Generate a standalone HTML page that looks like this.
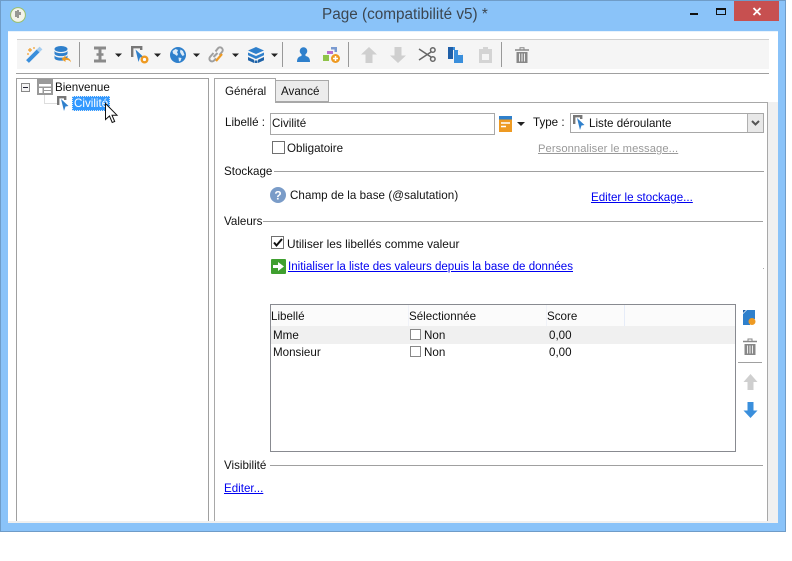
<!DOCTYPE html>
<html><head><meta charset="utf-8"><style>
html,body{margin:0;padding:0;background:#fff;width:792px;height:561px;overflow:hidden}
body{position:relative;font-family:"Liberation Sans",sans-serif;font-size:11.6px;color:#111}
.a{position:absolute}
.t{position:absolute;white-space:nowrap;line-height:16px;margin-top:1px}
.l{color:#0000f0;text-decoration:underline}
.hr{position:absolute;height:1px;background:#a0a0a0}
.cb{position:absolute;box-sizing:border-box;border:1px solid #707070;background:#fff}
svg{position:absolute;overflow:visible}
</style></head><body>
<div class="a" style="left:0;top:0;width:786px;height:532px;box-sizing:border-box;background:#8ac3f9;border:1px solid #6f9cc8"></div>
<div class="a" style="left:8px;top:31px;width:770px;height:492px;background:#fff"></div>
<div class="a" style="left:8px;top:521px;width:770px;height:2px;background:#f0f0f0"></div>
<div class="a" style="left:768px;top:102px;width:10px;height:421px;background:#f0f0f0"></div>
<div class="a" style="left:8px;top:31px;width:770px;height:1px;background:#e8f3fd"></div>

<svg style="left:10px;top:7px" width="16" height="16" viewBox="0 0 16 16"><circle cx="8" cy="8" r="7.4" fill="#f3f3ea" stroke="#9abf6a"/><path d="M6 4v6M8 3v8M10 5v3" stroke="#666" stroke-width="1.3" fill="none"/></svg>
<div class="t" style="left:322px;top:6px;margin-top:0;font-size:15.3px;line-height:18px;color:#3c4650">Page (compatibilité v5) *</div>
<div class="a" style="left:690px;top:13px;width:8px;height:2px;background:#111"></div>
<div class="a" style="left:716px;top:8px;width:10px;height:7px;box-sizing:border-box;border:1px solid #111;border-top-width:2px"></div>
<div class="a" style="left:734px;top:1px;width:45px;height:20px;background:#c75050"></div>
<svg style="left:752px;top:7px" width="10" height="9" viewBox="0 0 10 9"><path d="M1.5 1L8.5 8M8.5 1L1.5 8" stroke="#fff" stroke-width="1.8"/></svg>

<div class="a" style="left:17px;top:39px;width:752px;height:30px;background:#f5f5f5;border-top:1px solid #d0d0d0;box-sizing:border-box"></div>
<div class="hr" style="left:16px;top:73px;width:753px"></div>
<div class="a" style="left:79px;top:42px;width:1px;height:25px;background:#999"></div>
<div class="a" style="left:282px;top:42px;width:1px;height:25px;background:#999"></div>
<div class="a" style="left:348px;top:42px;width:1px;height:25px;background:#999"></div>
<div class="a" style="left:501px;top:42px;width:1px;height:25px;background:#999"></div>

<!-- wand -->
<svg style="left:26px;top:46px" width="17" height="17" viewBox="0 0 17 17"><path d="M1.500 15.500L12.500 4.500" stroke="#3a8fdc" stroke-width="4"/><path d="M12 5l3-3" stroke="#a5cdf0" stroke-width="4"/><path d="M2 4h4M4 2v4M8 1v2M1 8h2" stroke="#f0a030" stroke-width="1.200"/></svg>
<!-- db -->
<svg style="left:54px;top:46px" width="18" height="17" viewBox="0 0 18 17"><ellipse cx="7" cy="3" rx="6.500" ry="3" fill="#2f80cc"/><path d="M.5 4.500c0 3.500 13 3.500 13 0V7.500c0 3.500-13 3.500-13 0zM.5 9c0 3.500 13 3.500 13 0v3c0 3.500-13 3.500-13 0z" fill="#2f80cc"/><path d="M7.500 13l4-3.500v2.200c3 0 5 1 5.500 4.800-1-2-3-2.600-5.500-2.600v2.100z" fill="#ee9a22"/></svg>
<!-- I-beam -->
<svg style="left:94px;top:46px" width="12" height="17" viewBox="0 0 12 17"><path d="M0 2h12M0 15h12M6 2v13" stroke="#8a8a8a" stroke-width="3" fill="none"/><path d="M2.500 8.500h7" stroke="#8a8a8a" stroke-width="2.500"/></svg>
<!-- cursor gear -->
<svg style="left:131px;top:46px" width="18" height="18" viewBox="0 0 18 18"><path d="M1.200 11V1.200h9V4" stroke="#777" stroke-width="2.400" fill="none"/><path d="M4.500 3.500l8 7.500-3.500.5-1.500 4.500z" fill="#2f80cc"/><circle cx="13.500" cy="13.500" r="2.800" fill="#fff" stroke="#ee9a22" stroke-width="2.400"/></svg>
<!-- globe -->
<svg style="left:170px;top:47px" width="16" height="16" viewBox="0 0 16 16"><circle cx="8" cy="8" r="8" fill="#2f80cc"/><path d="M2.500 4l3-2 2.500 1-1 2.500 1 1.500-1 2-2-1.500-2-1zM10.500 2.500l2.500 1.500 1.500 4-2 1-1.500-2-1-2zM8.500 10.500l3 .5-1 3-1.500.5z" fill="#dcebf8"/></svg>
<!-- link -->
<svg style="left:208px;top:46px" width="17" height="17" viewBox="0 0 17 17"><path d="M7.500 5.500l2.300-3a2.700 2.700 0 0 1 4.400 3.200L11.500 9M5.500 7L2 11a2.700 2.700 0 0 0 4.200 3.400l1.800-2" stroke="#a0a0a0" stroke-width="2" fill="none"/><path d="M5.500 11l4-4" stroke="#a0a0a0" stroke-width="2"/><path d="M8 15l6-7" stroke="#ee9a22" stroke-width="2.200"/></svg>
<!-- layers -->
<svg style="left:248px;top:47px" width="16" height="16" viewBox="0 0 16 16"><path d="M8 0l8 3.500-8 3.500-8-3.500z" fill="#2f80cc"/><path d="M0 5.500l8 3.500 8-3.500v2.800L8 12 0 8.300z" fill="#2f80cc"/><path d="M0 10l6 2.800V16L0 13.200zM16 10l-6 2.800V16l6-2.800z" fill="#1f63a8"/><path d="M6.500 13.500h3V16h-3z" fill="#1f63a8"/></svg>
<!-- carets -->
<svg style="left:0;top:0" width="792" height="100"><g fill="#222"><path d="M115 53.500h7l-3.500 3.500zM154 53.500h7l-3.500 3.500zM193 53.500h7l-3.500 3.500zM232 53.500h7l-3.500 3.500zM271 53.500h7l-3.500 3.500z"/></g></svg>
<!-- user -->
<svg style="left:297px;top:47px" width="13" height="15" viewBox="0 0 13 15"><circle cx="6.500" cy="4" r="3.800" fill="#2f80cc"/><path d="M4.500 6h4v3c3 .5 4.500 2 4.500 6H0c0-4 1.500-5.500 4.500-6z" fill="#2f80cc"/></svg>
<!-- shapes -->
<svg style="left:323px;top:47px" width="17" height="17" viewBox="0 0 17 17"><rect x="0" y="8" width="6" height="6" fill="#8fc34a"/><path d="M4 4h6v3H4z" fill="#b66fd0"/><path d="M8 0h6v5h-2.500V2.500H8z" fill="#7a9ad0"/><circle cx="12.500" cy="11.500" r="4.500" fill="#ee9a22"/><path d="M10 11.500h5M12.500 9v5" stroke="#fff" stroke-width="1.500"/></svg>
<!-- up down -->
<svg style="left:361px;top:47px" width="16" height="16" viewBox="0 0 16 16"><path d="M8 0l8 7.500H11.500V16h-7V7.500H0z" fill="#cfcfcf"/></svg>
<svg style="left:390px;top:47px" width="16" height="16" viewBox="0 0 16 16"><path d="M8 16L0 8.500H4.500V0h7v8.500H16z" fill="#cfcfcf"/></svg>
<!-- scissors -->
<svg style="left:419px;top:47px" width="17" height="15" viewBox="0 0 17 15"><circle cx="13.800" cy="3" r="2.300" fill="none" stroke="#666" stroke-width="1.500"/><circle cx="13.800" cy="12" r="2.300" fill="none" stroke="#666" stroke-width="1.500"/><path d="M0 2l12 8M0 13L12 5" stroke="#666" stroke-width="1.500"/></svg>
<!-- copy -->
<svg style="left:448px;top:47px" width="16" height="16" viewBox="0 0 16 16"><path d="M0 0h5v12H0z" fill="#1f5fa8"/><path d="M5 0h2v3H5z" fill="#3a8fdc"/><path d="M6 3h4l5 5v8H6z" fill="#3a8fdc"/><path d="M10 3l5 5h-5z" fill="#f5f5f5"/></svg>
<!-- paste -->
<svg style="left:479px;top:47px" width="13" height="16" viewBox="0 0 13 16"><path d="M0 2h4V0h5v2h4v14H0z" fill="#d4d4d4"/><path d="M3 7h7v6H3z" fill="#f5f5f5"/></svg>
<!-- trash -->
<svg style="left:515px;top:47px" width="14" height="16" viewBox="0 0 14 16"><path d="M0 3h14" stroke="#888" stroke-width="1.500"/><path d="M5 2.500V.8h4v1.700" stroke="#888" fill="none"/><path d="M1.500 5h11v11h-11z" fill="#888"/><path d="M4.500 6.500v8M7 6.500v8M9.500 6.500v8" stroke="#eee" stroke-width="1"/></svg>

<!-- tree -->
<div class="a" style="left:16px;top:78px;width:193px;height:443px;box-sizing:border-box;border:1px solid #a0a0a0;border-bottom:0"></div>
<div class="a" style="left:21px;top:83px;width:9px;height:9px;box-sizing:border-box;border:1px solid #888;background:#f4f4f4"></div>
<div class="a" style="left:23px;top:87px;width:5px;height:1px;background:#223"></div>
<svg style="left:37px;top:79px" width="16" height="16" viewBox="0 0 16 16"><path d="M0 0h16v16H0z" fill="#999"/><path d="M2 5h12v2.500H2zM2 9h3.500v5H2zM7 9h7v2H7zM7 12h7v2H7z" fill="#fff"/></svg>
<div class="t" style="left:55px;top:79px">Bienvenue</div>
<div class="a" style="left:44px;top:95px;width:1px;height:8px;background:#ddd"></div>
<div class="a" style="left:44px;top:103px;width:13px;height:1px;background:#ddd"></div>
<svg style="left:57px;top:96px" width="13" height="15" viewBox="0 0 13 15"><path d="M1.200 9V1.200h7V4" stroke="#777" stroke-width="2.400" fill="none"/><path d="M4 3l7.500 7-3 .5-1.500 4.500z" fill="#2f80cc"/></svg>
<div class="t" style="left:72px;top:96px;margin-top:0;width:38px;height:15px;background:#3399ff;color:#fff;outline:1px dotted #dbe9f7;outline-offset:-1px;padding-left:2px;box-sizing:border-box;line-height:15px;overflow:hidden">Civilité</div>
<svg style="left:105px;top:103px" width="13" height="21" viewBox="0 0 13 21"><path d="M.5.500v16l4-3.500 2.700 6.500 2.500-1-2.700-6.300h5z" fill="#fff" stroke="#111" stroke-width="1"/></svg>

<!-- tabs -->
<div class="a" style="left:214px;top:102px;width:554px;height:419px;box-sizing:border-box;border:1px solid #a8a8a8;border-bottom:0"></div>
<div class="a" style="left:275px;top:80px;width:54px;height:22px;box-sizing:border-box;border:1px solid #a8a8a8;background:#ececec"></div>
<div class="a" style="left:214px;top:78px;width:62px;height:25px;box-sizing:border-box;border:1px solid #a8a8a8;border-bottom:0;background:#fff"></div>
<div class="t" style="left:225px;top:83px">Général</div>
<div class="t" style="left:281px;top:83px">Avancé</div>

<div class="t" style="left:225px;top:114px">Libellé :</div>
<div class="a" style="left:270px;top:113px;width:225px;height:22px;box-sizing:border-box;border:1px solid #a8a8a8"></div>
<div class="t" style="left:272px;top:115px">Civilité</div>
<svg style="left:499px;top:116px" width="13" height="16" viewBox="0 0 13 16"><path d="M0 0h13v3.500H0z" fill="#2f80cc"/><path d="M0 3.500h13V16H0z" fill="#ee9a22"/><path d="M2 7h9M2 10.500h5" stroke="#fff" stroke-width="1.500"/></svg>
<svg style="left:517px;top:122px" width="8" height="4" viewBox="0 0 8 4"><path d="M0 0h8L4 4z" fill="#222"/></svg>
<div class="t" style="left:533px;top:114px">Type :</div>
<div class="a" style="left:570px;top:113px;width:194px;height:20px;box-sizing:border-box;border:1px solid #a8a8a8"></div>
<div class="a" style="left:747px;top:114px;width:16px;height:18px;background:#e8e8e8;border-left:1px solid #b0b0b0;box-sizing:border-box"></div>
<svg style="left:751px;top:120px" width="9" height="6" viewBox="0 0 9 6"><path d="M1 1l3.500 3.500L8 1" stroke="#555" stroke-width="2" fill="none"/></svg>
<svg style="left:573px;top:115px" width="13" height="15" viewBox="0 0 13 15"><path d="M1.200 9V1.200h7V4" stroke="#777" stroke-width="2.400" fill="none"/><path d="M4 3l7.500 7-3 .5-1.500 4.500z" fill="#2f80cc"/></svg>
<div class="t" style="left:589px;top:115px">Liste déroulante</div>

<div class="cb" style="left:272px;top:141px;width:13px;height:13px"></div>
<div class="t" style="left:287px;top:140px">Obligatoire</div>
<div class="t" style="left:538px;top:140px;color:#999;text-decoration:underline;font-size:11.2px;letter-spacing:.08px">Personnaliser le message...</div>

<div class="t" style="left:224px;top:163px">Stockage</div>
<div class="hr" style="left:274px;top:171px;width:490px"></div>
<svg style="left:270px;top:187px" width="16" height="16" viewBox="0 0 16 16"><circle cx="8" cy="8" r="8" fill="#7a9cc8"/><text x="8" y="12.500" font-family="Liberation Sans" font-size="12" font-weight="bold" fill="#fff" text-anchor="middle">?</text></svg>
<div class="t" style="left:290px;top:187px;letter-spacing:.06px">Champ de la base (@salutation)</div>
<div class="t l" style="left:591px;top:189px">Editer le stockage...</div>

<div class="t" style="left:224px;top:213px">Valeurs</div>
<div class="hr" style="left:263px;top:221px;width:500px"></div>
<div class="cb" style="left:271px;top:236px;width:13px;height:13px"></div>
<svg style="left:273px;top:238px" width="10" height="9" viewBox="0 0 10 9"><path d="M1 4.500l2.500 3L9 1" stroke="#111" stroke-width="2" fill="none"/></svg>
<div class="t" style="left:287px;top:236px;margin-top:0;font-size:11.9px">Utiliser les libellés comme valeur</div>
<svg style="left:271px;top:259px" width="15" height="15" viewBox="0 0 15 15"><rect width="15" height="15" rx="1" fill="#3f9f2f"/><path d="M2 6h5V3l6 4.500-6 4.500V9H2z" fill="#fff"/></svg>
<div class="t l" style="left:288px;top:259px;margin-top:0;font-size:11.55px">Initialiser la liste des valeurs depuis la base de données</div>
<div class="a" style="left:763px;top:268px;width:1px;height:1px;background:#aaa"></div>

<!-- table -->
<div class="a" style="left:270px;top:304px;width:466px;height:148px;box-sizing:border-box;border:1px solid #888a90;background:#fff"></div>
<div class="a" style="left:271px;top:305px;width:464px;height:21px;background:#fbfbfb"></div>
<div class="a" style="left:271px;top:326px;width:464px;height:18px;background:#f0f0f0"></div>
<div class="a" style="left:408px;top:305px;width:1px;height:21px;background:#f0f2f8"></div>
<div class="a" style="left:546px;top:305px;width:1px;height:21px;background:#f0f2f8"></div>
<div class="a" style="left:624px;top:305px;width:1px;height:21px;background:#e6ecf8"></div>
<div class="t" style="left:271px;top:308px">Libellé</div>
<div class="t" style="left:409px;top:308px">Sélectionnée</div>
<div class="t" style="left:547px;top:308px">Score</div>
<div class="t" style="left:273px;top:327px">Mme</div>
<div class="cb" style="left:410px;top:329px;width:11px;height:11px;border-color:#888"></div>
<div class="t" style="left:424px;top:327px">Non</div>
<div class="t" style="left:549px;top:327px">0,00</div>
<div class="t" style="left:273px;top:344px">Monsieur</div>
<div class="cb" style="left:410px;top:346px;width:11px;height:11px;border-color:#888"></div>
<div class="t" style="left:424px;top:344px">Non</div>
<div class="t" style="left:549px;top:344px">0,00</div>

<!-- side buttons -->
<svg style="left:743px;top:310px" width="13" height="16" viewBox="0 0 13 16"><path d="M0 4L4 0H12V9H7V15H0z" fill="#2f80cc"/><path d="M0 0h3L0 3z" fill="#1f5fa8"/><circle cx="9" cy="11.500" r="3.500" fill="#ee9a22"/></svg>
<svg style="left:743px;top:338px" width="14" height="17" viewBox="0 0 14 17"><path d="M0 3.500h14" stroke="#888" stroke-width="1.500"/><path d="M5 3V1h4v2" stroke="#888" fill="none"/><path d="M1.500 6h11v11h-11z" fill="#888"/><path d="M4.500 7.500v8M7 7.500v8M9.500 7.500v8" stroke="#eee"/></svg>
<div class="hr" style="left:738px;top:362px;width:24px"></div>
<svg style="left:743px;top:374px" width="15" height="16" viewBox="0 0 15 16"><path d="M7.500 0l7 8H10.500V16h-6V8H.5z" fill="#cfcfcf"/></svg>
<svg style="left:743px;top:402px" width="15" height="16" viewBox="0 0 15 16"><path d="M7.500 16L.5 8.500H4.500V0h6v8.500h4z" fill="#3a8fdc"/></svg>

<div class="t" style="left:224px;top:457px">Visibilité</div>
<div class="hr" style="left:270px;top:465px;width:493px"></div>
<div class="t l" style="left:224px;top:480px">Editer...</div>
</body></html>
